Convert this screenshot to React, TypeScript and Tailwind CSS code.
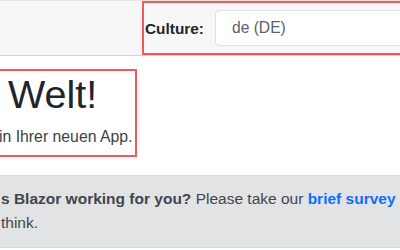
export default function App() {
  return (
    <div className="w-[400px] h-[250px] overflow-hidden bg-white font-['Liberation_Sans',Arial,sans-serif] text-[#212529]">
      <div className="h-[56px] bg-[#f7f7f7] border-t border-t-[#e4e4e4] border-b border-b-[#d6d5d5] flex">
        <div className="ml-[142px] flex-1 -mr-[10px] h-[54px] border-2 border-[#f45858] flex items-center pl-[1px]">
          <label className="text-[15.4px] font-bold leading-[23px] text-[#212529]">Culture:</label>
          <div className="ml-[11px] flex-1 h-[36px] bg-white border border-[#dcdfe3] rounded-[4px] flex items-center pl-[16px] text-[15.6px] text-[#595f65]">
            de (DE)
          </div>
        </div>
      </div>
      <div className="mt-[13px] -ml-[4px] w-[141px] h-[88px] border-2 border-[#f45858] pl-[12px]">
        <h1 className="-ml-[2px] text-[39.5px] leading-[46px] text-[#212529] whitespace-nowrap">Welt!</h1>
        <p className="mt-[8px] -ml-[11px] text-[15.8px] leading-[23px] text-[#3b3f44] whitespace-nowrap">in Ihrer neuen App.</p>
      </div>
      <div className="mt-[18px] -mx-[10px] h-[73px] bg-[#e2e3e5] border border-[#d8dadd] pt-[11px] pl-[10px] text-[15.5px] leading-[24px] text-[#41464b] whitespace-nowrap">
        <div>
          <strong>s Blazor working for you?</strong> Please take our{" "}
          <a className="font-bold text-[#0d6efd]">brief survey</a>
        </div>
        <div>think.</div>
      </div>
    </div>
  );
}
